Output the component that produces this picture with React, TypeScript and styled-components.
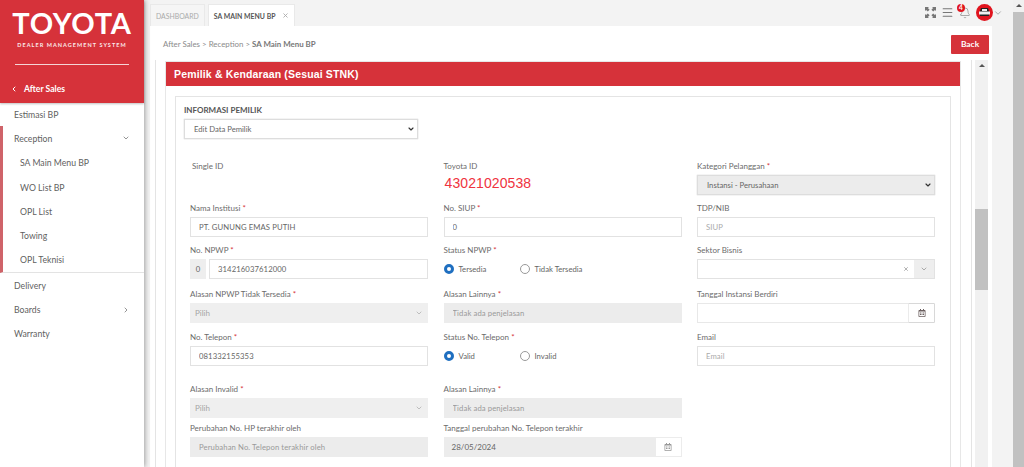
import React from "react";
import styled, { createGlobalStyle } from "styled-components";
import { Bell, ChevronDown, ChevronLeft, ChevronRight, Menu, X } from "lucide-react";
import { FaRegCalendarAlt } from "react-icons/fa";

const GlobalStyle = createGlobalStyle`
  html, body, #root {
    margin: 0;
    padding: 0;
    height: 467px;
    overflow: hidden;
  }
  * { box-sizing: border-box; }
  body {
    font-family: Lato, "Liberation Sans", sans-serif;
    color: #555;
  }
`;

const Shell = styled.div`
  display: flex;
  width: 1024px;
  height: 467px;
  background: #f3f3f3;
`;

const Sidebar = styled.aside`
  width: 144px;
  flex: none;
  background: #fff;
  box-shadow: 1px 0 5px rgba(0, 0, 0, 0.35);
  position: relative;
  z-index: 2;
`;

const Brand = styled.div`
  height: 103px;
  background: #d6323a;
  color: #fff;
  padding-top: 6px;
  box-shadow: 0 1px 2px rgba(0, 0, 0, 0.25);
`;

const Logo = styled.div`
  font-size: 29px;
  line-height: 34px;
  font-weight: 700;
  letter-spacing: 0.8px;
  text-align: center;
`;

const Tagline = styled.div`
  font-size: 5.5px;
  line-height: 8px;
  margin-top: 1px;
  font-weight: 700;
  letter-spacing: 1.05px;
  text-align: center;
  white-space: nowrap;
  opacity: 0.9;
`;

const BrandRule = styled.div`
  height: 1px;
  margin: 15px 15px 0;
  background: #f5d5d6;
`;

const BackLink = styled.div`
  display: flex;
  align-items: center;
  gap: 6px;
  margin-top: 17px;
  padding-left: 10px;
  font-size: 8.6px;
  line-height: 14px;
  font-weight: 700;
`;

const NavList = styled.nav`
  margin-top: -1px;
`;

const NavItem = styled.div<{ $sub?: boolean }>`
  display: flex;
  align-items: center;
  justify-content: space-between;
  height: 24.3px;
  padding: 0 14px 0 ${(p) => (p.$sub ? "17px" : "14px")};
  font-size: 8.7px;
  color: #5f5f5f;
`;

const NavGroup = styled.div`
  border-left: 3px solid #cf6369;
  border-bottom: 1px solid #e3e3e3;
`;

const GroupHead = styled(NavItem)`
  padding-left: 11px;
`;

const Main = styled.main`
  flex: 1;
  min-width: 0;
  display: flex;
  flex-direction: column;
  padding-left: 6px;
`;

const TabBar = styled.div`
  height: 26px;
  flex: none;
  display: flex;
  align-items: flex-end;
  gap: 3px;
  position: relative;
`;

const Tab = styled.div<{ $active?: boolean }>`
  height: 22px;
  display: flex;
  align-items: center;
  gap: 7px;
  padding: 0 5px;
  border: 1px solid #e9e9e9;
  border-bottom: 0;
  font-size: 6.9px;
  background: ${(p) => (p.$active ? "#fff" : "#f5f5f5")};
  color: ${(p) => (p.$active ? "#555" : "#aaa")};
  font-weight: ${(p) => (p.$active ? 700 : 400)};
`;

const TopIcons = styled.div`
  position: absolute;
  top: 4px;
  right: 10px;
  display: flex;
  align-items: center;
  color: #777;
`;

const IconSlot = styled.span`
  display: flex;
  width: 17px;
  justify-content: center;
  position: relative;
`;

const Badge = styled.span`
  position: absolute;
  top: -3px;
  left: 1px;
  width: 8px;
  height: 8px;
  border-radius: 50%;
  background: #e0141e;
  color: #fff;
  font-size: 6.5px;
  line-height: 8px;
  font-weight: 700;
  text-align: center;
`;

const Avatar = styled.span`
  width: 17px;
  height: 17px;
  margin-left: 3px;
  border-radius: 50%;
  background: #e0141e;
  display: flex;
  align-items: center;
  justify-content: center;
`;

const Workspace = styled.div`
  flex: 1;
  min-height: 0;
  display: flex;
`;

const Page = styled.div`
  width: 842px;
  background: #fff;
  display: flex;
  flex-direction: column;
  min-height: 0;
`;

const PageHead = styled.div`
  height: 34px;
  flex: none;
  display: flex;
  align-items: center;
  justify-content: space-between;
  padding: 2px 3px 0 13px;
`;

const Crumbs = styled.div`
  font-size: 7.9px;
  color: #8b8b8b;
  b {
    font-weight: 700;
    color: #777;
  }
`;

const BackButton = styled.button`
  width: 38px;
  height: 19px;
  padding: 0;
  border: 0;
  border-radius: 1px;
  background: #d6323a;
  color: #fff;
  font: 700 8.4px Lato, sans-serif;
`;

const ScrollArea = styled.div`
  flex: 1;
  min-height: 0;
  display: flex;
  gap: 3px;
  padding: 0 4px 0 5px;
`;

const CardRail = styled.div`
  width: 817px;
  flex: none;
  border-left: 1px solid #e4e4e4;
  border-right: 1px solid #e4e4e4;
  padding: 1px 10px 0 9px;
  overflow: hidden;
`;

const Card = styled.section`
  height: 420px;
  border: 1px solid #e7e7e7;
`;

const CardTitle = styled.h2`
  margin: 0;
  height: 24px;
  padding-left: 8px;
  background: #d6323a;
  color: #fff;
  font: 700 10.5px/24px "Liberation Sans", sans-serif;
  letter-spacing: 0.15px;
`;

const CardBody = styled.div`
  margin: 10px 9px 0;
  height: 400px;
  border: 1px solid #e4e4e4;
  padding: 8px 8px 0;
`;

const SectionTitle = styled.div`
  font-size: 8px;
  line-height: 10px;
  font-weight: 700;
  color: #555;
  margin-bottom: 4px;
`;

const SelectWrap = styled.div<{ $width?: string }>`
  position: relative;
  width: ${(p) => p.$width || "100%"};
  height: 20px;
  color: #333;
  svg {
    position: absolute;
    top: 6px;
    right: 3px;
    pointer-events: none;
  }
`;

const NativeSelect = styled.select<{ $locked?: boolean }>`
  display: block;
  width: 100%;
  height: 20px;
  padding: 0 9px;
  appearance: none;
  border: 1px solid #ddd;
  box-shadow: 0 0 1px #bbb;
  border-radius: 0;
  background: ${(p) => (p.$locked ? "#ececec" : "#fff")};
  color: #666;
  font: 7.7px Lato, sans-serif;
  outline: none;
`;

const FormGrid = styled.div`
  display: grid;
  grid-template-columns: repeat(3, 238px);
  grid-template-rows: 42px 42px 44px 43px 52px 39px 40px;
  column-gap: 15.5px;
  margin: 21px 0 0 6px;
`;

const Field = styled.div``;

const FieldLabel = styled.label<{ $inset?: boolean }>`
  display: block;
  height: 10px;
  margin: 1px 0 4px;
  padding-left: ${(p) => (p.$inset ? "2px" : "0")};
  font-size: 8px;
  line-height: 10px;
  color: #6b6b6b;
  i {
    color: #d6323a;
    font-style: normal;
  }
`;

const TextInput = styled.input<{ $off?: boolean }>`
  display: block;
  width: 100%;
  height: 20px;
  padding: 0 8px;
  border: 1px solid ${(p) => (p.$off ? "#ececec" : "#e2e2e2")};
  background: ${(p) => (p.$off ? "#ececec" : "#fff")};
  color: #666;
  font: 7.7px Lato, sans-serif;
  letter-spacing: 0.1px;
  outline: none;
  &::placeholder {
    color: ${(p) => (p.$off ? "#9a9a9a" : "#aaa")};
    opacity: 1;
  }
`;

const InputRow = styled.div`
  display: flex;
  height: 20px;
`;

const Prefix = styled.span`
  width: 16px;
  flex: none;
  margin-right: 3px;
  background: #eee;
  color: #666;
  font-size: 7.7px;
  line-height: 20px;
  text-align: center;
`;

const DisabledPick = styled.div`
  height: 20px;
  padding: 0 5px;
  display: flex;
  align-items: center;
  justify-content: space-between;
  background: #efefef;
  color: #a5a5a5;
  font-size: 8px;
`;

const DateWrap = styled.div<{ $off?: boolean }>`
  display: flex;
  height: 20px;
  border: 1px solid ${(p) => (p.$off ? "#ececec" : "#e8e8e8")};
  background: ${(p) => (p.$off ? "#ececec" : "#fff")};
  color: #666;
  font-size: 8px;
  line-height: 18px;
`;

const DateValue = styled.span`
  flex: 1;
  padding-left: 7px;
`;

const DateButton = styled.span<{ $raised?: boolean }>`
  width: 25px;
  flex: none;
  display: flex;
  align-items: center;
  justify-content: center;
  background: #fff;
  color: ${(p) => (p.$raised ? "#6b5f5f" : "#999")};
  box-shadow: ${(p) => (p.$raised ? "0 0 1px #888" : "none")};
`;

const ComboBox = styled.div`
  display: flex;
  height: 20px;
  border: 1px solid #e2e2e2;
`;

const ComboClear = styled.span`
  flex: 1;
  display: flex;
  align-items: center;
  justify-content: flex-end;
  padding-right: 5px;
  color: #999;
`;

const ComboArrow = styled.span`
  width: 20px;
  display: flex;
  align-items: center;
  justify-content: center;
  background: #eee;
  color: #888;
`;

const RadioRow = styled.div`
  display: flex;
  height: 19px;
  margin-top: 1.5px;
  align-items: center;
`;

const RadioOption = styled.span<{ $width: string }>`
  width: ${(p) => p.$width};
  display: flex;
  align-items: center;
  gap: 5px;
  font-size: 7.7px;
  color: #666;
`;

const RadioDot = styled.span<{ $on?: boolean }>`
  width: 10px;
  height: 10px;
  border-radius: 50%;
  background: #fff;
  border: ${(p) => (p.$on ? "3px solid #1f6fc0" : "1px solid #999")};
`;

const IdNumber = styled.div`
  margin-top: -1px;
  font: 14px/18px "Liberation Sans", sans-serif;
  color: #ef3340;
  padding-left: 1px;
  letter-spacing: 0.1px;
`;

const Track = styled.div<{ $width: string; $bg: string }>`
  width: ${(p) => p.$width};
  flex: none;
  background: ${(p) => p.$bg};
  display: flex;
  flex-direction: column;
  align-items: center;
`;

const Arrow = styled.span`
  width: 0;
  height: 0;
  margin-top: 4px;
  border-left: 3px solid transparent;
  border-right: 3px solid transparent;
  border-bottom: 3px solid #555;
`;

const Thumb = styled.div<{ $top: string; $height: string; $bg: string }>`
  width: 100%;
  height: ${(p) => p.$height};
  margin-top: ${(p) => p.$top};
  background: ${(p) => p.$bg};
  display: flex;
  flex-direction: column;
  align-items: center;
`;

const Gutter = styled.div`
  flex: 1;
`;

const Star = () => <i> *</i>;

const ExpandIcon = () => (
  <svg width="11" height="11" viewBox="0 0 11 11" fill="#777">
    <path d="M0 0h4L2.9 1.1 4.6 2.8 2.8 4.6 1.1 2.9 0 4zM11 0v4L9.9 2.9 8.2 4.6 6.4 2.8 8.1 1.1 7 0zM0 11V7l1.1 1.1 1.7-1.7 1.8 1.8-1.7 1.7L4 11zM11 11H7l1.1-1.1-1.7-1.7 1.8-1.8 1.7 1.7L11 7z" />
  </svg>
);

const CarIcon = () => (
  <svg width="11" height="9" viewBox="0 0 11 9">
    <path d="M2 0h7l1 3v5H1V3z" fill="#222" />
    <rect x="0" y="3.5" width="11" height="3" fill="#eee" />
    <rect x="3" y="1" width="5" height="2" fill="#eee" />
  </svg>
);

const App: React.FC = () => {
  return (
    <Shell>
      <GlobalStyle />
      <Sidebar>
        <Brand>
          <Logo>TOYOTA</Logo>
          <Tagline>DEALER MANAGEMENT SYSTEM</Tagline>
          <BrandRule />
          <BackLink>
            <ChevronLeft size={8} strokeWidth={3} />
            After Sales
          </BackLink>
        </Brand>
        <NavList>
          <NavItem>Estimasi BP</NavItem>
          <NavGroup>
            <GroupHead>
              Reception <ChevronDown size={8} />
            </GroupHead>
            <NavItem $sub>SA Main Menu BP</NavItem>
            <NavItem $sub>WO List BP</NavItem>
            <NavItem $sub>OPL List</NavItem>
            <NavItem $sub>Towing</NavItem>
            <NavItem $sub>OPL Teknisi</NavItem>
          </NavGroup>
          <NavItem>Delivery</NavItem>
          <NavItem>
            Boards <ChevronRight size={8} />
          </NavItem>
          <NavItem>Warranty</NavItem>
        </NavList>
      </Sidebar>

      <Main>
        <TabBar>
          <Tab>DASHBOARD</Tab>
          <Tab $active>
            SA MAIN MENU BP <X size={7} color="#aaa" strokeWidth={3} />
          </Tab>
          <TopIcons>
            <IconSlot>
              <ExpandIcon />
            </IconSlot>
            <IconSlot>
              <Menu size={13} />
            </IconSlot>
            <IconSlot>
              <Badge>4</Badge>
              <Bell size={12} strokeWidth={1.2} />
            </IconSlot>
            <Avatar>
              <CarIcon />
            </Avatar>
            <ChevronDown size={10} color="#999" />
          </TopIcons>
        </TabBar>
        <Workspace>
          <Page>
            <PageHead>
              <Crumbs>
                After Sales &gt; Reception &gt; <b>SA Main Menu BP</b>
              </Crumbs>
              <BackButton>Back</BackButton>
            </PageHead>
            <ScrollArea>
              <CardRail>
                <Card>
                  <CardTitle>Pemilik &amp; Kendaraan (Sesuai STNK)</CardTitle>
                  <CardBody>
                    <SectionTitle>INFORMASI PEMILIK</SectionTitle>
                    <SelectWrap $width="234px">
                      <NativeSelect defaultValue="edit">
                        <option value="edit">Edit Data Pemilik</option>
                      </NativeSelect>
                      <ChevronDown size={8} strokeWidth={3.5} />
                    </SelectWrap>
                    <FormGrid>
                      <Field>
                        <FieldLabel $inset>Single ID</FieldLabel>
                      </Field>
                      <Field>
                        <FieldLabel>Toyota ID</FieldLabel>
                        <IdNumber>43021020538</IdNumber>
                      </Field>
                      <Field>
                        <FieldLabel>
                          Kategori Pelanggan
                          <Star />
                        </FieldLabel>
                        <SelectWrap>
                          <NativeSelect $locked defaultValue="inst">
                            <option value="inst">Instansi - Perusahaan</option>
                          </NativeSelect>
                          <ChevronDown size={8} strokeWidth={3.5} />
                        </SelectWrap>
                      </Field>

                      <Field>
                        <FieldLabel>
                          Nama Institusi
                          <Star />
                        </FieldLabel>
                        <TextInput defaultValue="PT. GUNUNG EMAS PUTIH" />
                      </Field>
                      <Field>
                        <FieldLabel>
                          No. SIUP
                          <Star />
                        </FieldLabel>
                        <TextInput defaultValue="0" />
                      </Field>
                      <Field>
                        <FieldLabel>TDP/NIB</FieldLabel>
                        <TextInput placeholder="SIUP" />
                      </Field>

                      <Field>
                        <FieldLabel>
                          No. NPWP
                          <Star />
                        </FieldLabel>
                        <InputRow>
                          <Prefix>0</Prefix>
                          <TextInput defaultValue="314216037612000" />
                        </InputRow>
                      </Field>
                      <Field>
                        <FieldLabel>
                          Status NPWP
                          <Star />
                        </FieldLabel>
                        <RadioRow>
                          <RadioOption $width="76px">
                            <RadioDot $on />
                            Tersedia
                          </RadioOption>
                          <RadioOption $width="90px">
                            <RadioDot />
                            Tidak Tersedia
                          </RadioOption>
                        </RadioRow>
                      </Field>
                      <Field>
                        <FieldLabel>Sektor Bisnis</FieldLabel>
                        <ComboBox>
                          <ComboClear>
                            <X size={6} strokeWidth={3} />
                          </ComboClear>
                          <ComboArrow>
                            <ChevronDown size={8} />
                          </ComboArrow>
                        </ComboBox>
                      </Field>

                      <Field>
                        <FieldLabel>
                          Alasan NPWP Tidak Tersedia
                          <Star />
                        </FieldLabel>
                        <DisabledPick>
                          Pilih <ChevronDown size={8} />
                        </DisabledPick>
                      </Field>
                      <Field>
                        <FieldLabel>
                          Alasan Lainnya
                          <Star />
                        </FieldLabel>
                        <TextInput $off disabled placeholder="Tidak ada penjelasan" />
                      </Field>
                      <Field>
                        <FieldLabel>Tanggal Instansi Berdiri</FieldLabel>
                        <DateWrap>
                          <DateValue />
                          <DateButton $raised>
                            <FaRegCalendarAlt size={8} />
                          </DateButton>
                        </DateWrap>
                      </Field>

                      <Field>
                        <FieldLabel>
                          No. Telepon
                          <Star />
                        </FieldLabel>
                        <TextInput defaultValue="081332155353" />
                      </Field>
                      <Field>
                        <FieldLabel>
                          Status No. Telepon
                          <Star />
                        </FieldLabel>
                        <RadioRow>
                          <RadioOption $width="76px">
                            <RadioDot $on />
                            Valid
                          </RadioOption>
                          <RadioOption $width="60px">
                            <RadioDot />
                            Invalid
                          </RadioOption>
                        </RadioRow>
                      </Field>
                      <Field>
                        <FieldLabel>Email</FieldLabel>
                        <TextInput placeholder="Email" />
                      </Field>

                      <Field>
                        <FieldLabel>
                          Alasan Invalid
                          <Star />
                        </FieldLabel>
                        <DisabledPick>
                          Pilih <ChevronDown size={8} />
                        </DisabledPick>
                      </Field>
                      <Field>
                        <FieldLabel>
                          Alasan Lainnya
                          <Star />
                        </FieldLabel>
                        <TextInput $off disabled placeholder="Tidak ada penjelasan" />
                      </Field>
                      <Field />

                      <Field>
                        <FieldLabel>Perubahan No. HP terakhir oleh</FieldLabel>
                        <TextInput $off disabled placeholder="Perubahan No. Telepon terakhir oleh" />
                      </Field>
                      <Field>
                        <FieldLabel>Tanggal perubahan No. Telepon terakhir</FieldLabel>
                        <DateWrap $off>
                          <DateValue>28/05/2024</DateValue>
                          <DateButton>
                            <FaRegCalendarAlt size={8} />
                          </DateButton>
                        </DateWrap>
                      </Field>
                      <Field />
                    </FormGrid>
                  </CardBody>
                </Card>
              </CardRail>
              <Track $width="13px" $bg="#f1f1f1">
                <Arrow />
                <Thumb $top="142px" $height="81px" $bg="#c1c1c1" />
              </Track>
            </ScrollArea>
          </Page>
          <Gutter />
        </Workspace>
      </Main>
      <Track $width="11px" $bg="#c1c1c1">
        <Thumb $top="0" $height="12px" $bg="#f1f1f1">
          <Arrow />
        </Thumb>
      </Track>
    </Shell>
  );
};

export default App;
